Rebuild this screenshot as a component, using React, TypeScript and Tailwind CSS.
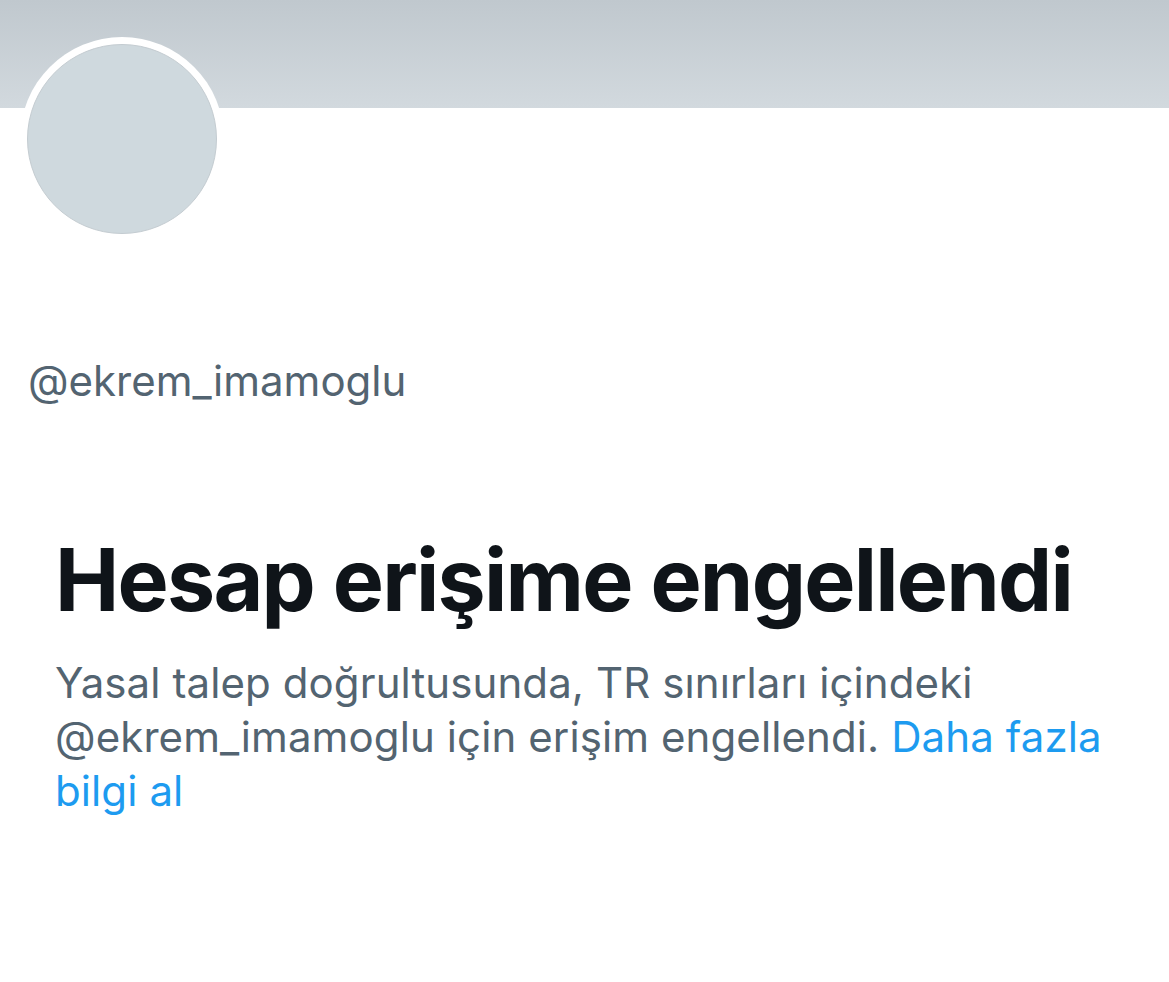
import React from "react";

const App = () => {
  return (
    <div
      className="w-[1169px] h-[982px] bg-white overflow-hidden"
      style={{ fontFamily: "Inter, 'Noto Sans', sans-serif" }}
    >
      {/* banner */}
      <div className="h-[108px] bg-gradient-to-b from-[#c0c8ce] to-[#d2d9de]" />

      {/* avatar */}
      <div className="-mt-[71px] ml-[20px] w-[204px] h-[204px] rounded-full bg-white p-[7px]">
        <div className="w-full h-full rounded-full bg-[#cfd9de] border border-[#c4ccd1]" />
      </div>

      <p className="mt-[116px] ml-[28px] text-[42px] leading-[48px] text-[#536471]">
        @ekrem_imamoglu
      </p>

      <div className="mt-[125px] px-[55px]">
        <h1 className="text-[86px] leading-[100px] font-bold text-[#0f1419] tracking-[-1.75px]">
          Hesap erişime engellendi
        </h1>
        <p className="mt-[26px] text-[42px] leading-[54px] text-[#536471] tracking-[0.1px]">
          Yasal talep doğrultusunda, TR sınırları içindeki @ekrem_imamoglu için
          erişim engellendi.{" "}
          <a href="#" className="text-[#1d9bf0]">
            Daha fazla bilgi al
          </a>
        </p>
      </div>
    </div>
  );
};

export default App;
